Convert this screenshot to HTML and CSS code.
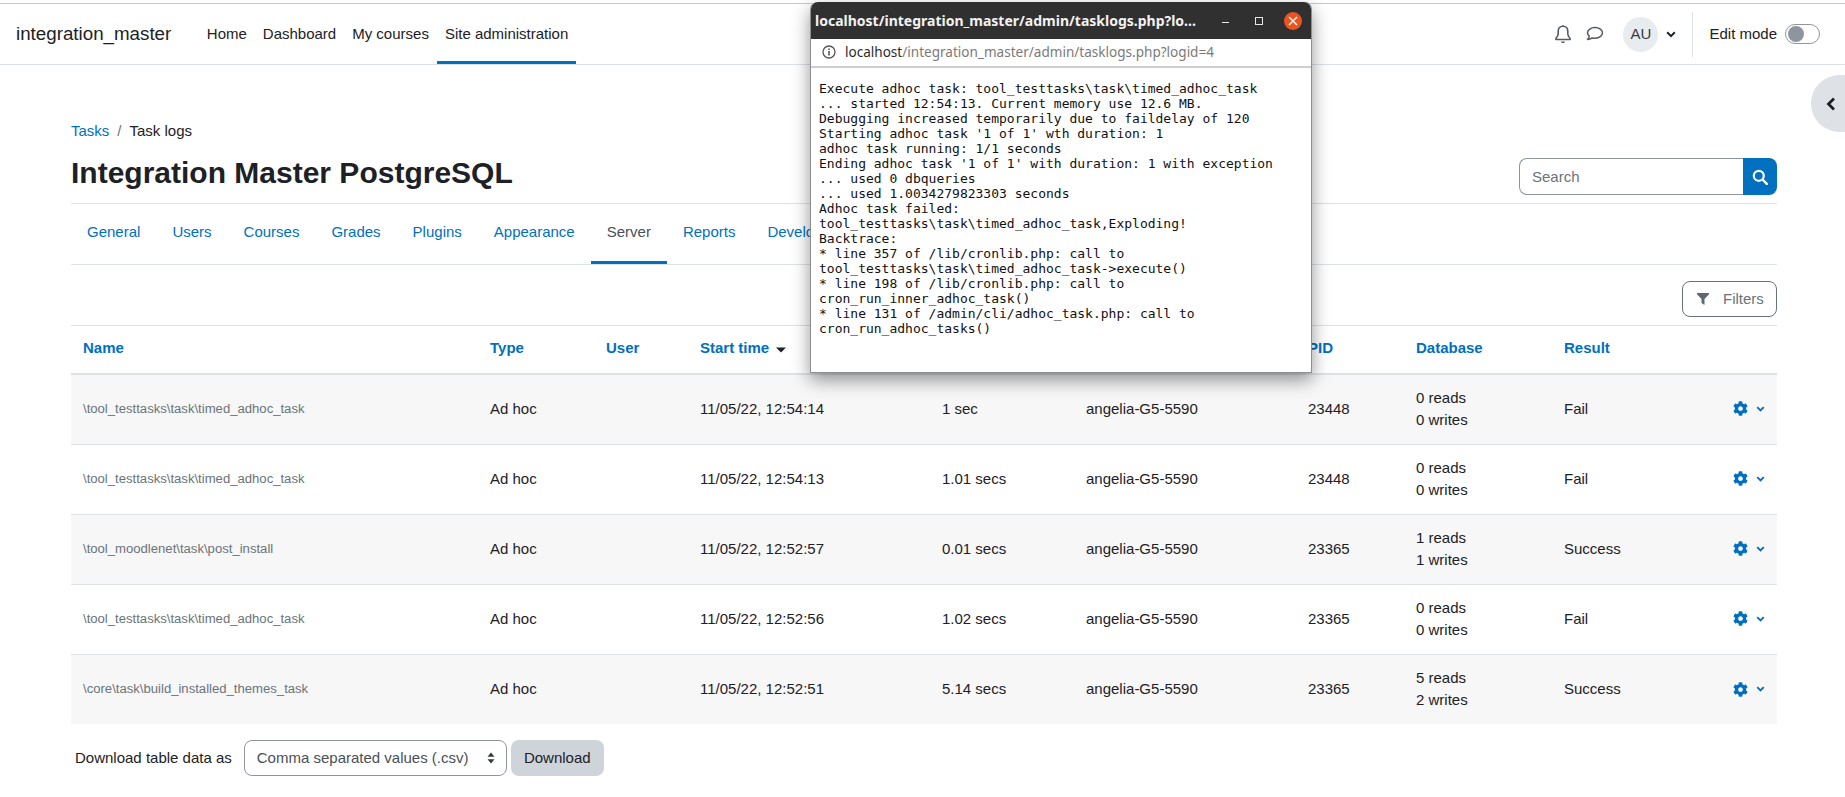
FILE: index.html
```html
<!DOCTYPE html>
<html lang="en">
<head>
<meta charset="utf-8">
<title>Task logs</title>
<link rel="stylesheet" href="styles.css">
</head>
<body>
<div class="top-strip"></div>
<header class="navbar">
  <a class="brand">integration_master</a>
  <nav class="primary">
    <a class="primary-item">Home</a>
    <a class="primary-item">Dashboard</a>
    <a class="primary-item">My courses</a>
    <a class="primary-item active">Site administration</a>
  </nav>
  <div class="user-tools">
    <svg class="icon-bell" viewBox="0 0 18 20" width="18" height="20"><path d="M9 2.2c-3 0-4.800 2.200-4.800 5v2.600c0 2-1 3.300-2.300 4.700v1h14.200v-1c-1.300-1.400-2.300-2.700-2.300-4.700V7.200c0-2.800-1.800-5-4.800-5z" fill="none" stroke="#555b61" stroke-width="1.600" stroke-linejoin="round"/><path d="M7 17.500c.3 1 1 1.500 2 1.500s1.700-.5 2-1.500zM8 2.200c0-1.400 2-1.400 2 0z" fill="#555b61"/></svg>
    <svg class="icon-chat" viewBox="0 0 18 16" width="18" height="16"><path d="M9 1.500c-4.200 0-7.500 2.400-7.500 5.300 0 1.300.7 2.500 1.800 3.400-.2 1.300-1 2.500-1.800 3.300 1.800 0 3.500-.7 4.700-1.600.9.200 1.800.3 2.800.3 4.200 0 7.500-2.400 7.500-5.400S13.200 1.500 9 1.500z" fill="none" stroke="#555b61" stroke-width="1.500" stroke-linejoin="round"/></svg>
    <span class="avatar">AU</span>
    <svg class="chev-user" viewBox="0 0 10 7" width="10" height="7"><path d="M1.200 1.300 5 5.100l3.800-3.800" fill="none" stroke="#1d2125" stroke-width="2"/></svg>
    <span class="divider"></span>
    <span class="edit-label">Edit mode</span>
    <span class="toggle"><span class="knob"></span></span>
  </div>
</header>

<button class="drawer-toggle" aria-label="Open drawer">
  <svg viewBox="0 0 10 14" width="10" height="14"><path d="M8 1.500 2.500 7 8 12.500" fill="none" stroke="#1d2125" stroke-width="2.800"/></svg>
</button>

<main class="page">
  <div class="crumbs"><a class="link">Tasks</a><span class="crumb-sep">/</span><span>Task logs</span></div>
  <div class="page-head">
    <h1 class="title">Integration Master PostgreSQL</h1>
    <form class="search">
      <input class="search-input" placeholder="Search">
      <button class="search-btn" type="button" aria-label="Search">
        <svg viewBox="0 0 16 16" width="16" height="16"><circle cx="6.800" cy="6.800" r="5" fill="none" stroke="#fff" stroke-width="2.200"/><path d="m10.500 10.500 4.300 4.300" stroke="#fff" stroke-width="2.400" stroke-linecap="round"/></svg>
      </button>
    </form>
  </div>
  <nav class="tabs">
    <a class="tab">General</a>
    <a class="tab">Users</a>
    <a class="tab">Courses</a>
    <a class="tab">Grades</a>
    <a class="tab">Plugins</a>
    <a class="tab">Appearance</a>
    <a class="tab current">Server</a>
    <a class="tab">Reports</a>
    <a class="tab">Development</a>
  </nav>
  <div class="filter-row">
    <button class="filters" type="button">
      <svg viewBox="0 0 12 12" width="12" height="12"><path d="M0 0h12v1.200L7.500 6v6L4.500 10V6L0 1.200z" fill="#5f6870"/></svg>
      <span>Filters</span>
    </button>
  </div>
  <table class="logs">
    <colgroup>
      <col class="c-name"><col class="c-type"><col class="c-user"><col class="c-start"><col class="c-dur"><col class="c-host"><col class="c-pid"><col class="c-db"><col class="c-res"><col class="c-act">
    </colgroup>
    <thead>
      <tr>
        <th><a class="link">Name</a></th>
        <th><a class="link">Type</a></th>
        <th><a class="link">User</a></th>
        <th><a class="link">Start time</a><svg class="sort" viewBox="0 0 10 6" width="10" height="6"><path d="M0 .5h10L5 5.500z" fill="#1d2125"/></svg></th>
        <th><a class="link">Duration</a></th>
        <th><a class="link">Hostname</a></th>
        <th><a class="link">PID</a></th>
        <th><a class="link">Database</a></th>
        <th><a class="link">Result</a></th>
        <th></th>
      </tr>
    </thead>
    <tbody>
      <tr>
        <td class="task">\tool_testtasks\task\timed_adhoc_task</td><td>Ad hoc</td><td></td><td>11/05/22, 12:54:14</td><td>1 sec</td><td>angelia-G5-5590</td><td>23448</td><td>0 reads<br>0 writes</td><td>Fail</td>
        <td class="actions"><svg class="gear" viewBox="0 0 512 512" width="15" height="15"><use href="#cog"/></svg><svg viewBox="0 0 10 7" width="9" height="6"><use href="#chev"/></svg></td>
      </tr>
      <tr>
        <td class="task">\tool_testtasks\task\timed_adhoc_task</td><td>Ad hoc</td><td></td><td>11/05/22, 12:54:13</td><td>1.01 secs</td><td>angelia-G5-5590</td><td>23448</td><td>0 reads<br>0 writes</td><td>Fail</td>
        <td class="actions"><svg class="gear" viewBox="0 0 512 512" width="15" height="15"><use href="#cog"/></svg><svg viewBox="0 0 10 7" width="9" height="6"><use href="#chev"/></svg></td>
      </tr>
      <tr>
        <td class="task">\tool_moodlenet\task\post_install</td><td>Ad hoc</td><td></td><td>11/05/22, 12:52:57</td><td>0.01 secs</td><td>angelia-G5-5590</td><td>23365</td><td>1 reads<br>1 writes</td><td>Success</td>
        <td class="actions"><svg class="gear" viewBox="0 0 512 512" width="15" height="15"><use href="#cog"/></svg><svg viewBox="0 0 10 7" width="9" height="6"><use href="#chev"/></svg></td>
      </tr>
      <tr>
        <td class="task">\tool_testtasks\task\timed_adhoc_task</td><td>Ad hoc</td><td></td><td>11/05/22, 12:52:56</td><td>1.02 secs</td><td>angelia-G5-5590</td><td>23365</td><td>0 reads<br>0 writes</td><td>Fail</td>
        <td class="actions"><svg class="gear" viewBox="0 0 512 512" width="15" height="15"><use href="#cog"/></svg><svg viewBox="0 0 10 7" width="9" height="6"><use href="#chev"/></svg></td>
      </tr>
      <tr>
        <td class="task">\core\task\build_installed_themes_task</td><td>Ad hoc</td><td></td><td>11/05/22, 12:52:51</td><td>5.14 secs</td><td>angelia-G5-5590</td><td>23365</td><td>5 reads<br>2 writes</td><td>Success</td>
        <td class="actions"><svg class="gear" viewBox="0 0 512 512" width="15" height="15"><use href="#cog"/></svg><svg viewBox="0 0 10 7" width="9" height="6"><use href="#chev"/></svg></td>
      </tr>
    </tbody>
  </table>
  <form class="download">
    <label class="download-label">Download table data as</label>
    <span class="select-wrap">
      <select class="format"><option>Comma separated values (.csv)</option></select>
      <svg class="select-arrows" viewBox="0 0 8 12" width="8" height="12"><path d="M4 .5 7.500 4.800H.5zM4 11.500.5 7.200h7z" fill="#343a40"/></svg>
    </span>
    <button class="download-btn" type="button">Download</button>
  </form>
</main>

<section class="popup">
  <div class="popup-title">
    <span class="popup-title-text">localhost/integration_master/admin/tasklogs.php?lo...</span>
    <span class="win-min"></span>
    <span class="win-max"></span>
    <span class="win-close"><svg viewBox="0 0 10 10" width="10" height="10"><path d="m1 1 8 8M9 1 1 9" stroke="#fff" stroke-width="1.400"/></svg></span>
  </div>
  <div class="popup-url">
    <svg viewBox="0 0 14 14" width="14" height="14"><circle cx="7" cy="7" r="6" fill="none" stroke="#555" stroke-width="1.300"/><path d="M6.200 6h1.600v4.500H6.200zM6.200 3.400h1.600V5H6.200z" fill="#555"/></svg>
    <span class="url-host">localhost</span><span class="url-path">/integration_master/admin/tasklogs.php?logid=4</span>
  </div>
  <pre class="popup-log">Execute adhoc task: tool_testtasks\task\timed_adhoc_task
... started 12:54:13. Current memory use 12.6 MB.
Debugging increased temporarily due to faildelay of 120
Starting adhoc task '1 of 1' wth duration: 1
adhoc task running: 1/1 seconds
Ending adhoc task '1 of 1' with duration: 1 with exception
... used 0 dbqueries
... used 1.0034279823303 seconds
Adhoc task failed:
tool_testtasks\task\timed_adhoc_task,Exploding!
Backtrace:
* line 357 of /lib/cronlib.php: call to
tool_testtasks\task\timed_adhoc_task-&gt;execute()
* line 198 of /lib/cronlib.php: call to
cron_run_inner_adhoc_task()
* line 131 of /admin/cli/adhoc_task.php: call to
cron_run_adhoc_tasks()</pre>
</section>

<svg class="defs" width="0" height="0">
  <defs>
    <path id="cog" fill="#0070bf" d="M487.400 315.700l-42.600-24.600c4.300-23.200 4.300-47 0-70.200l42.600-24.600c4.900-2.800 7.100-8.600 5.500-14-11.100-35.600-30-67.800-54.700-94.600-3.800-4.100-10-5.100-14.800-2.300L380.800 110c-17.900-15.400-38.500-27.300-60.800-35.100V25.800c0-5.600-3.900-10.500-9.400-11.700-36.700-8.200-74.300-7.800-109.200 0-5.500 1.200-9.400 6.100-9.400 11.700V75c-22.200 7.900-42.800 19.800-60.800 35.100L88.700 85.500c-4.900-2.800-11-1.900-14.800 2.300-24.700 26.700-43.600 58.900-54.700 94.600-1.700 5.400.6 11.200 5.500 14L67.300 221c-4.300 23.200-4.300 47 0 70.200l-42.600 24.600c-4.900 2.800-7.100 8.600-5.500 14 11.100 35.600 30 67.800 54.700 94.600 3.800 4.100 10 5.100 14.800 2.300l42.600-24.600c17.900 15.400 38.500 27.300 60.800 35.100v49.200c0 5.600 3.900 10.500 9.400 11.700 36.700 8.200 74.300 7.800 109.200 0 5.500-1.200 9.400-6.100 9.400-11.700v-49.200c22.200-7.900 42.800-19.800 60.800-35.100l42.600 24.600c4.900 2.800 11 1.900 14.800-2.300 24.700-26.700 43.600-58.900 54.700-94.600 1.500-5.500-.7-11.300-5.600-14.100zM256 336c-44.100 0-80-35.900-80-80s35.900-80 80-80 80 35.900 80 80-35.900 80-80 80z"/>
    <path id="chev" d="M1.200 1.300 5 5.100l3.800-3.800" fill="none" stroke="#0070bf" stroke-width="2.200"/>
  </defs>
</svg>
</body>
</html>
```

FILE: styles.css
```css
* { box-sizing: border-box; }
html, body { margin: 0; padding: 0; }
body {
  height: 797px;
  overflow: hidden;
  background: #fff;
  color: #1d2125;
  font: 15px/22.5px "Liberation Sans", Arial, sans-serif;
}
.defs { display: block; height: 0; }
.link { color: #0070bf; }

.top-strip { height: 4px; border-bottom: 1px solid #c8c8c8; }

.navbar {
  display: flex;
  align-items: center;
  height: 61px;
  padding: 0 25px 0 16px;
  border-bottom: 1px solid #dee2e6;
}
.brand { font-size: 18.750px; margin-right: 27.500px; }
.primary { display: flex; align-self: stretch; }
.primary-item {
  display: flex;
  align-items: center;
  padding: 3px 8px 0;
  border-bottom: 3px solid transparent;
}
.primary-item.active { border-bottom-color: #0070bf; }
.user-tools { display: flex; align-items: center; margin-left: auto; }
.icon-bell { margin-right: 14px; }
.icon-chat { margin-right: 19px; }
.avatar {
  display: flex;
  align-items: center;
  justify-content: center;
  width: 35px;
  height: 35px;
  border-radius: 50%;
  background: #e9ecef;
  color: #343a40;
  font-size: 15px;
}
.chev-user { margin-left: 8px; }
.divider { width: 1px; height: 45px; margin: 0 16px 0 16px; background: #dee2e6; }
.edit-label { margin-right: 8px; }
.toggle {
  display: flex;
  align-items: center;
  width: 35px;
  height: 20px;
  padding: 0 2px;
  border: 1px solid #8f959e;
  border-radius: 10px;
  background: #fff;
}
.knob { width: 16px; height: 16px; border-radius: 50%; background: #8f959e; }

.drawer-toggle {
  position: absolute;
  top: 75px;
  left: 1811px;
  display: flex;
  align-items: center;
  justify-content: flex-start;
  width: 40px;
  height: 57px;
  padding: 0 0 0 15px;
  border: 0;
  border-radius: 28.500px 0 0 28.500px;
  background: #dee2e6;
}

.page { padding: 55px 68px 0 71px; }
.crumbs { display: flex; height: 23px; }
.crumb-sep { margin: 0 8px; color: #6a737b; }

.page-head { display: flex; align-items: flex-start; justify-content: space-between; height: 56px; margin-top: 4px; }
.title { margin: 8px 0 0; font-size: 30px; line-height: 36px; font-weight: 700; }
.search { display: flex; height: 37px; margin-top: 11px; }
.search-input {
  width: 224px;
  padding: 1px 12px 0;
  border: 1px solid #8f959e;
  border-right: 0;
  border-radius: 8px 0 0 8px;
  font: inherit;
  color: #495057;
  outline: 0;
}
.search-input::placeholder { color: #6a737b; opacity: 1; }
.search-btn {
  display: flex;
  align-items: center;
  justify-content: center;
  width: 34px;
  padding: 0;
  border: 0;
  border-radius: 0 8px 8px 0;
  background: #0070bf;
}

.tabs {
  display: flex;
  height: 62px;
  border-top: 1px solid #dee2e6;
  border-bottom: 1px solid #dee2e6;
}
.tab {
  display: flex;
  align-items: center;
  padding: 0 16px;
  color: #0070bf;
  border-bottom: 3px solid transparent;
}
.tab.current { color: #495057; border-bottom-color: #0070bf; }

.filter-row { display: flex; justify-content: flex-end; padding: 16px 0 8px; height: 60px; }
.filters {
  display: flex;
  align-items: center;
  gap: 14px;
  width: 95px;
  height: 36px;
  padding: 0 0 0 14px;
  border: 1px solid #6a737b;
  border-radius: 8px;
  background: #fff;
  color: #6a737b;
  font: inherit;
}

.logs { width: 100%; table-layout: fixed; border-collapse: collapse; }
.c-name { width: 407px; }
.c-type { width: 116px; }
.c-user { width: 94px; }
.c-start { width: 242px; }
.c-dur { width: 144px; }
.c-host { width: 222px; }
.c-pid { width: 108px; }
.c-db { width: 148px; }
.c-res { width: 150px; }
.c-act { width: auto; }
.logs th, .logs td { padding: 12px; text-align: left; vertical-align: middle; }
.logs th { font-weight: 700; border-top: 1px solid #dee2e6; border-bottom: 2px solid #dee2e6; height: 48px; padding-top: 11px; padding-bottom: 13px; }
.logs td { border-top: 1px solid #dee2e6; height: 70px; }
.logs tbody tr:first-child td { border-top: 0; }
.logs tbody tr:nth-child(odd) { background: #f7f7f7; }
.sort { margin-left: 7px; }
.logs td.task { color: #6a737b; font-size: 13.125px; }
.logs td.actions { padding-right: 12px; text-align: right; }
.actions svg { vertical-align: middle; margin-bottom: 2px; }
.gear { margin-right: 8px; }

.download { display: flex; align-items: center; height: 36px; margin-top: 16px; padding-left: 4px; }
.download-label { margin-right: 12px; }
.select-wrap { position: relative; display: block; margin-right: 4px; }
.format {
  display: block;
  width: 263px;
  height: 36px;
  padding: 0 12px;
  border: 1px solid #8f959e;
  border-radius: 8px;
  background: #fff;
  color: #495057;
  font: inherit;
  appearance: none;
}
.select-arrows { position: absolute; top: 12px; right: 12px; }
.download-btn {
  width: 93px;
  height: 36px;
  padding: 0;
  border: 0;
  border-radius: 8px;
  background: #ced4da;
  color: #1d2125;
  font: inherit;
}

.popup {
  position: absolute;
  top: 2px;
  left: 810px;
  display: flex;
  flex-direction: column;
  width: 502px;
  height: 371px;
  border: 1px solid #8e8e8e;
  border-top: 0;
  border-radius: 7px 7px 0 0;
  background: #fff;
  box-shadow: 0 7px 18px rgba(0, 0, 0, .42);
}
.popup-title {
  display: flex;
  align-items: center;
  flex: none;
  height: 37px;
  padding: 0 9px 0 4px;
  border-radius: 7px 7px 0 0;
  background: #303030;
  color: #f2f2f2;
  font: 700 14px/20px "Noto Sans", sans-serif;
}
.popup-title-text { width: 399px; white-space: nowrap; overflow: hidden; }
.win-min { width: 8px; height: 1px; margin: 4px 0 0 14px; background: #e8e8e8; }
.win-max { width: 8px; height: 8px; margin-left: 26px; border: 1px solid #e8e8e8; }
.win-close {
  display: flex;
  align-items: center;
  justify-content: center;
  width: 18px;
  height: 18px;
  margin-left: 21px;
  border-radius: 50%;
  background: #e95420;
}
.popup-url {
  display: flex;
  align-items: center;
  flex: none;
  height: 29px;
  padding: 0 0 2px 11px;
  border-bottom: 2px solid #cfcfcf;
  font: 13.550px/20px "Noto Sans", sans-serif;
}
.popup-url svg { margin-right: 9px; }
.url-host { color: #2b2b2b; }
.url-path { color: #7a7a7a; }
.popup-log {
  margin: 0;
  padding: 13px 8px 0;
  color: #111;
  font: 13px/15px "DejaVu Sans Mono", monospace;
}
```
